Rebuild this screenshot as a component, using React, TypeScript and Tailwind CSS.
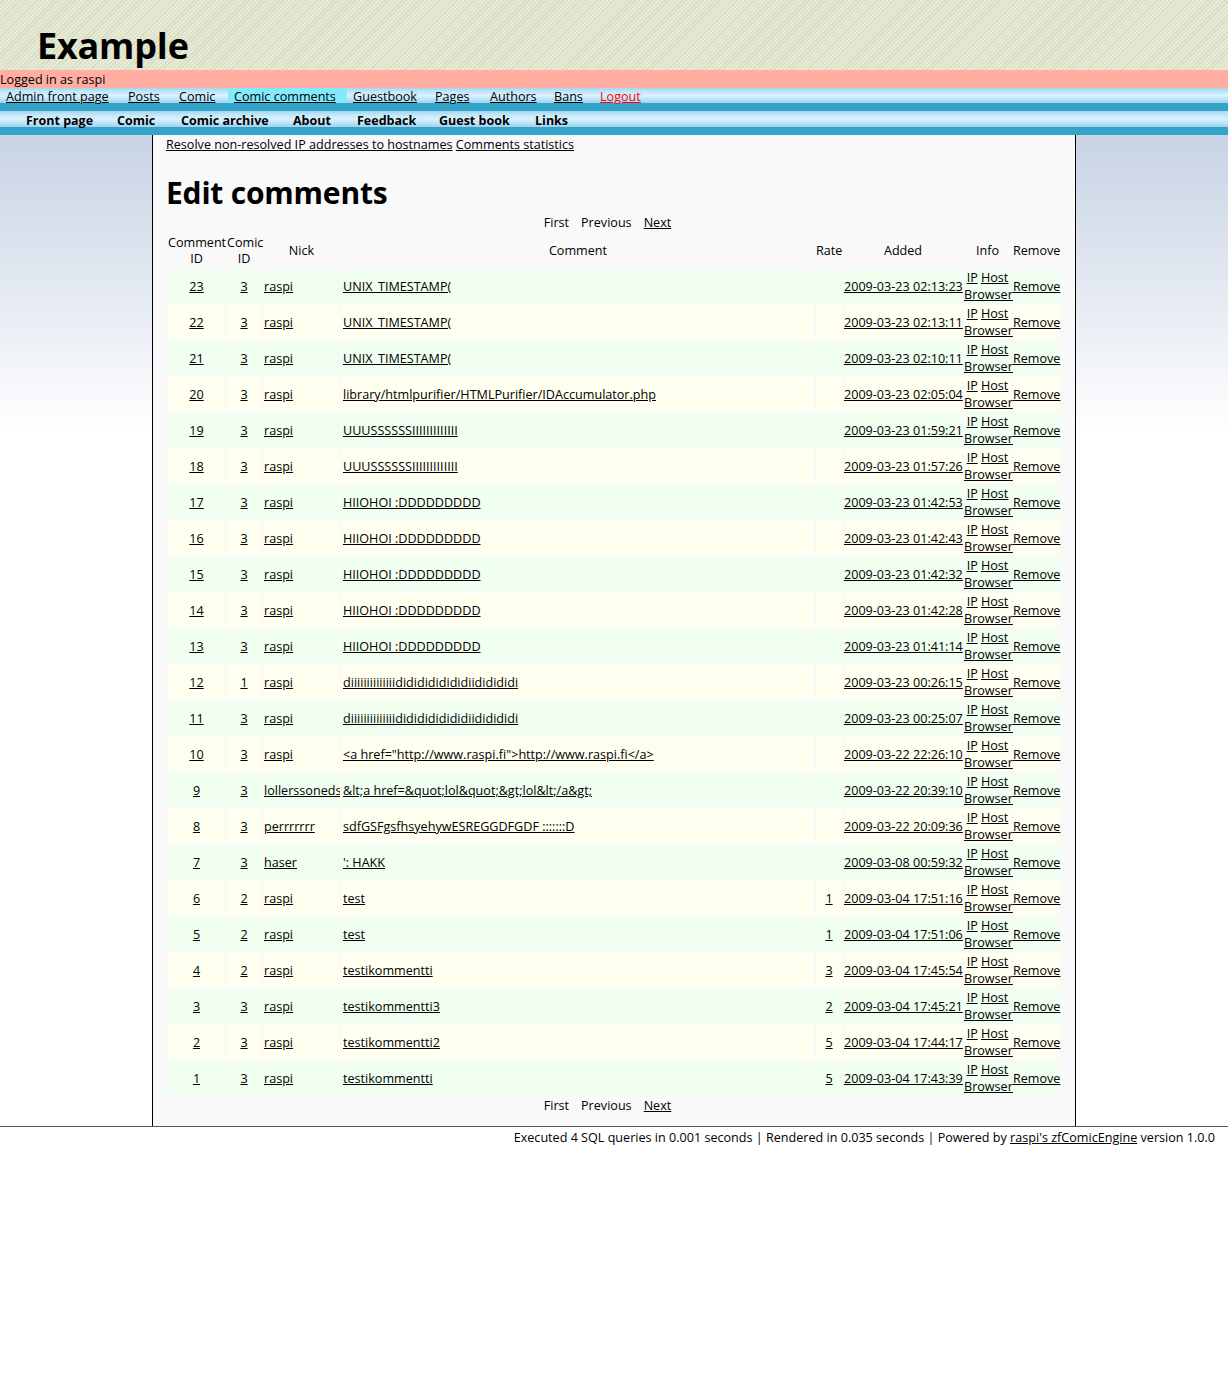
import React from "react";

type Row = [number, number, string, string, string, string];

const rows: Row[] = [
  [23, 3, "raspi", "UNIX_TIMESTAMP(", "", "2009-03-23 02:13:23"],
  [22, 3, "raspi", "UNIX_TIMESTAMP(", "", "2009-03-23 02:13:11"],
  [21, 3, "raspi", "UNIX_TIMESTAMP(", "", "2009-03-23 02:10:11"],
  [20, 3, "raspi", "library/htmlpurifier/HTMLPurifier/IDAccumulator.php", "", "2009-03-23 02:05:04"],
  [19, 3, "raspi", "UUUSSSSSSIIIIIIIIIIIII", "", "2009-03-23 01:59:21"],
  [18, 3, "raspi", "UUUSSSSSSIIIIIIIIIIIII", "", "2009-03-23 01:57:26"],
  [17, 3, "raspi", "HIIOHOI :DDDDDDDDD", "", "2009-03-23 01:42:53"],
  [16, 3, "raspi", "HIIOHOI :DDDDDDDDD", "", "2009-03-23 01:42:43"],
  [15, 3, "raspi", "HIIOHOI :DDDDDDDDD", "", "2009-03-23 01:42:32"],
  [14, 3, "raspi", "HIIOHOI :DDDDDDDDD", "", "2009-03-23 01:42:28"],
  [13, 3, "raspi", "HIIOHOI :DDDDDDDDD", "", "2009-03-23 01:41:14"],
  [12, 1, "raspi", "diiiiiiiiiiiiiidididididididiididididi", "", "2009-03-23 00:26:15"],
  [11, 3, "raspi", "diiiiiiiiiiiiiidididididididiididididi", "", "2009-03-23 00:25:07"],
  [10, 3, "raspi", '<a href="http://www.raspi.fi">http://www.raspi.fi</a>', "", "2009-03-22 22:26:10"],
  [9, 3, "lollerssoneds", "&lt;a href=&quot;lol&quot;&gt;lol&lt;/a&gt;", "", "2009-03-22 20:39:10"],
  [8, 3, "perrrrrrr", "sdfGSFgsfhsyehywESREGGDFGDF :::::::D", "", "2009-03-22 20:09:36"],
  [7, 3, "haser", "': HAKK", "", "2009-03-08 00:59:32"],
  [6, 2, "raspi", "test", "1", "2009-03-04 17:51:16"],
  [5, 2, "raspi", "test", "1", "2009-03-04 17:51:06"],
  [4, 2, "raspi", "testikommentti", "3", "2009-03-04 17:45:54"],
  [3, 3, "raspi", "testikommentti3", "2", "2009-03-04 17:45:21"],
  [2, 3, "raspi", "testikommentti2", "5", "2009-03-04 17:44:17"],
  [1, 3, "raspi", "testikommentti", "5", "2009-03-04 17:43:39"],
];

const adminLinks = [
  { label: "Admin front page", w: "w-[122px]" },
  { label: "Posts", w: "w-[51px]" },
  { label: "Comic", w: "w-[55px]" },
  { label: "Comic comments", w: "w-[119px]", active: true },
  { label: "Guestbook", w: "w-[82px]" },
  { label: "Pages", w: "w-[55px]" },
  { label: "Authors", w: "w-[64px]" },
  { label: "Bans", w: "w-[46px]" },
];

const mainLinks = [
  { label: "Front page", w: "w-[91px]" },
  { label: "Comic", w: "w-[64px]" },
  { label: "Comic archive", w: "w-[112px]" },
  { label: "About", w: "w-[64px]" },
  { label: "Feedback", w: "w-[82px]" },
  { label: "Guest book", w: "w-[96px]" },
  { label: "Links", w: "w-[60px]" },
];

const navBg =
  "bg-[linear-gradient(to_bottom,#a6d6f0_0%,#c2e7f9_25%,#d8f2fd_50%,#bde4f7_75%,#9cd2ed_100%)]";

const cell = "px-[1px] py-0";

const Pager: React.FC<{ top?: boolean }> = ({ top }) => (
  <div className={`flex justify-center gap-[12px] pr-[13px] leading-[17px] ${top ? "pt-px" : ""}`}>
    <span>First</span>
    <span>Previous</span>
    <a href="#" className="underline">
      Next
    </a>
  </div>
);

const App: React.FC = () => {
  return (
    <div className="min-h-[1376px] bg-white font-['Open_Sans',sans-serif] text-[12.6px] text-black">
      {/* header */}
      <header className="h-[70px] bg-[repeating-linear-gradient(135deg,#e7ead5_0px,#e7ead5_2px,#d6dac1_2px,#d6dac1_3px)] pl-[37px] pt-[22px]">
        <h1 className="text-[36px] font-bold leading-[48px] tracking-[-0.2px]">Example</h1>
      </header>

      <div className="h-[18px] bg-[#ffaea1] pt-px leading-[17px]">Logged in as raspi</div>

      {/* admin nav */}
      <nav className={`flex h-[15px] ${navBg}`}>
        {adminLinks.map((l) => (
          <div
            key={l.label}
            className={`${l.w} h-[15px] shrink-0 whitespace-nowrap pl-[6px] leading-[17px] ${l.active ? "bg-[#84e9fc]" : ""}`}
          >
            <a href="#" className="underline">
              {l.label}
            </a>
          </div>
        ))}
        <div className="h-[15px] pl-[6px] leading-[17px]">
          <a href="#" className="text-[#ff0000] underline">
            Logout
          </a>
        </div>
      </nav>
      <div className="h-[8px] bg-[#33a3c9]" />

      {/* main nav */}
      <nav className={`flex h-[16px] pl-[26px] ${navBg}`}>
        {mainLinks.map((l) => (
          <a
            key={l.label}
            href="#"
            className={`${l.w} h-[16px] shrink-0 whitespace-nowrap text-[12.5px] font-bold leading-[19px]`}
          >
            {l.label}
          </a>
        ))}
      </nav>
      <div className="h-[8px] bg-[#33a3c9]" />

      {/* body */}
      <div className="bg-[linear-gradient(to_bottom,#c8d3e4_0px,#ffffff_300px)] bg-no-repeat">
        <main className="mx-auto w-[924px] border-x border-black bg-[#f9f9f9] px-[13px] pb-[12px]">
          <div className="pt-px leading-[17px]">
            <a href="#" className="underline">
              Resolve non-resolved IP addresses to hostnames
            </a>{" "}
            <a href="#" className="underline">
              Comments statistics
            </a>
          </div>

          <h2 className="mt-[22px] mb-[2px] text-[30px] font-bold leading-[36px] tracking-[-0.2px]">
            Edit comments
          </h2>

          <Pager top />

          <table className="w-full table-fixed border-separate border-spacing-[2px]">
            <thead>
              <tr className="h-[34px] text-center leading-[16px]">
                <th className="w-[57px] px-0 pt-[1px] pb-0 font-normal">
                  Comment
                  <br />
                  ID
                </th>
                <th className="w-[34px] px-0 pt-[1px] pb-0 font-normal">
                  Comic
                  <br />
                  ID
                </th>
                <th className="w-[77px] px-0 pt-[1px] pb-0 font-normal">Nick</th>
                <th className="w-[472px] px-0 pt-[1px] pb-0 font-normal">Comment</th>
                <th className="w-[26px] px-0 pt-[1px] pb-0 font-normal">Rate</th>
                <th className="w-[118px] px-0 pt-[1px] pb-0 font-normal">Added</th>
                <th className="w-[47px] px-0 pt-[1px] pb-0 font-normal">Info</th>
                <th className="w-[47px] px-0 pt-[1px] pb-0 font-normal">Remove</th>
              </tr>
            </thead>
            <tbody>
              {rows.map(([id, comic, nick, comment, rate, added], i) => (
                <tr
                  key={id}
                  className={`h-[34px] leading-[17px] ${i % 2 === 0 ? "bg-[#f0fff0]" : "bg-[#fffff0]"}`}
                >
                  <td className={`${cell} text-center`}>
                    <a href="#" className="underline">
                      {id}
                    </a>
                  </td>
                  <td className={`${cell} text-center`}>
                    <a href="#" className="underline">
                      {comic}
                    </a>
                  </td>
                  <td className={`${cell} overflow-hidden whitespace-nowrap`}>
                    <a href="#" className="underline">
                      {nick}
                    </a>
                  </td>
                  <td className={`${cell} overflow-hidden whitespace-nowrap`}>
                    <a href="#" className="underline">
                      {comment}
                    </a>
                  </td>
                  <td className={`${cell} text-center`}>
                    {rate && (
                      <a href="#" className="underline">
                        {rate}
                      </a>
                    )}
                  </td>
                  <td className="whitespace-nowrap p-0 text-center">
                    <a href="#" className="underline">
                      {added}
                    </a>
                  </td>
                  <td className="px-0 pt-[1px] pb-0 text-center leading-[16.5px]">
                    <a href="#" className="underline">
                      IP
                    </a>{" "}
                    <a href="#" className="underline">
                      Host
                    </a>
                    <br />
                    <a href="#" className="underline">
                      Browser
                    </a>
                  </td>
                  <td className="whitespace-nowrap p-0 text-center">
                    <a href="#" className="underline">
                      Remove
                    </a>
                  </td>
                </tr>
              ))}
            </tbody>
          </table>

          <Pager />
        </main>
      </div>

      <footer className="border-t border-[#555555] pr-[13px] pt-[2px] text-right leading-[17px]">
        Executed 4 SQL queries in 0.001 seconds | Rendered in 0.035 seconds | Powered by{" "}
        <a href="#" className="underline">
          raspi's zfComicEngine
        </a>{" "}
        version 1.0.0
      </footer>
    </div>
  );
};

export default App;
